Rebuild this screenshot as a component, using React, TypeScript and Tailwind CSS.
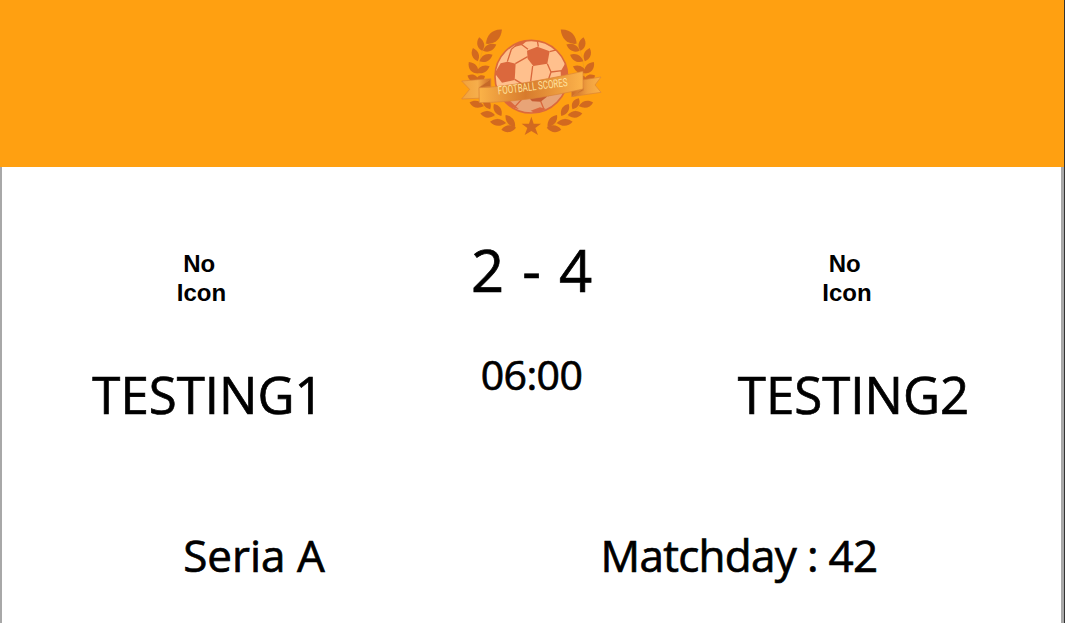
const leaves: [number, number, number, number, number][] = [
  [132, 50, 32, 13, -42],
  [92, 72, 21, 9, -102],
  [119, 83, 22, 9, -25],
  [76, 104, 21, 9, -110],
  [108, 114, 22, 9, -27],
  [70, 143, 22, 10, -128],
  [99, 148, 22, 9, -25],
  [69, 174, 18, 9, 205],
  [91, 176, 16, 8, -30],
  [80, 253, 22, 9, 14],
  [111, 251, 19, 9, 60],
  [113, 283, 22, 9, 6],
  [143, 270, 21, 9, 58],
  [144, 307, 24, 9, 4],
  [181, 303, 23, 9, 52],
  [176, 326, 22, 9, -8],
];

function Leaves() {
  return (
    <g>
      <path d="M108 66 Q88 104 84 170 M88 244 Q118 292 198 324" fill="none" stroke="#e59524" strokeWidth="1.5" />
      {leaves.map(([x, y, rx, ry, angle], i) => (
        <path
          key={i}
          transform={`translate(${x} ${y}) rotate(${angle}) scale(${rx} ${ry * 1.5})`}
          d="M-1 0 C-.5 -.9 .35 -1.1 1 0 C.35 1 -.45 1 -1 0Z"
          fill="#d2691f"
        />
      ))}
    </g>
  );
}

function Logo() {
  return (
    <svg width="165" height="125" viewBox="0 0 495 375" role="img" aria-label="Football Scores">
      <defs>
        <linearGradient id="band">
          <stop offset="0" stopColor="#fbb348" />
          <stop offset=".45" stopColor="#d77b2d" />
          <stop offset="1" stopColor="#fcb34b" />
        </linearGradient>
        <linearGradient id="tail-left">
          <stop offset="0" stopColor="#f2a23c" />
          <stop offset=".55" stopColor="#f6ae4b" />
          <stop offset="1" stopColor="#cc6a27" />
        </linearGradient>
        <linearGradient id="tail-right">
          <stop offset="0" stopColor="#cc6a27" />
          <stop offset=".55" stopColor="#f0a040" />
          <stop offset="1" stopColor="#fbb247" />
        </linearGradient>
        <clipPath id="ball">
          <circle cx="244" cy="170" r="110" />
        </clipPath>
      </defs>
      <Leaves />
      <g transform="translate(488 0) scale(-1 1)">
        <Leaves />
      </g>
      <g clipPath="url(#ball)">
        <circle cx="244" cy="170" r="110" fill="#ffc08d" />
        <path d="M134 220 L360 190 V290 H134Z" fill="#e8a477" />
        <g fill="none" stroke="#d9673c" strokeWidth="4">
          <path d="M196 131 L233 110 M172 125 L184 88 L205 70 L217 75 L234 88 M265 80 L262 62 M299 95 L325 88 M292 131 L303 156 L293 185 M303 156 L336 152 M248 138 L242 184 M194 178 L230 200 M170 236 L216 237 L236 231 M216 237 L193 262 M272 244 L282 268 M293 228 L326 214" />
        </g>
        <g fill="#db683d">
          <path d="M231 92 L262 80 L299 94 L292 131 L250 138 L233 116Z" />
          <path d="M152 130 L172 125 L197 131 L194 180 L156 188 L134 160Z" />
          <path d="M190 82 L210 63 L238 57 L216 75Z" />
          <path d="M298 66 L323 74 L343 105 L325 92Z" />
          <path d="M332 154 L346 130 L358 160 L350 195 L333 180Z" />
          <path d="M236 232 L293 216 L291 230 L272 245 L246 244Z" fill="#c65b32" />
          <path d="M145 210 L174 237 L207 268 L175 258Z" />
          <path d="M242 272 L270 262 L288 267 L260 282Z" />
        </g>
      </g>
      <circle cx="244" cy="170" r="109" fill="none" stroke="#dc693b" strokeWidth="5" />
      <g stroke="#db8436" strokeWidth="2" strokeLinejoin="round">
        <path d="M35 183 L122 176 V233 L35 237 L59 208Z" fill="url(#tail-left)" />
        <path d="M365 185 L453 171 L435 195 L453 217 L365 230Z" fill="url(#tail-right)" />
        <path d="M87 203 L122 177 V199Z M366 230 L400 205 V211Z" fill="#c56929" />
        <path d="M87 203 C160 202 292 178 399 154 V207 C299 231 183 247 88 248Z" fill="url(#band)" />
      </g>
      <text
        x="248"
        y="211"
        transform="rotate(-7 248 200)"
        textAnchor="middle"
        textLength="210"
        lengthAdjust="spacingAndGlyphs"
        fontFamily="Roboto, sans-serif"
        fontSize="34"
        fill="#ffe3a0"
      >
        FOOTBALL SCORES
      </text>
      <path d="M244 290 L251 311 L273 311 L256 324 L264 345 L244 333 L224 345 L232 324 L215 311 L237 311Z" fill="#d2691f" />
    </svg>
  );
}

function Team({ name }: { name: string }) {
  return (
    <div className="flex flex-col items-center">
      <div className="mr-[13px] w-[50px] whitespace-pre text-center font-['Liberation_Sans',sans-serif] text-2xl leading-[29px] font-bold [-webkit-text-stroke:0]">
        <span className="pl-[2px]">{"No "}</span>
        {"\nIcon"}
      </div>
      <h2 className="mt-[52px] text-[51px] leading-[70px] whitespace-nowrap">{name}</h2>
    </div>
  );
}

export default function App() {
  return (
    <div className="h-[623px] w-full overflow-hidden border-r border-[#333333] bg-white font-['Open_Sans',sans-serif] text-black">
      <header className="flex h-[167px] items-start justify-center bg-[#ffa011] pt-5">
        <Logo />
      </header>
      <main className="h-[456px] border-r-[3px] border-l-2 border-[#a8a8a8] [-webkit-text-stroke:0.7px_black]">
        <section className="grid h-[330px] grid-cols-[412px_235px_409px] pt-[82px]">
          <Team name="TESTING1" />
          <div className="flex flex-col items-center pt-[1px]">
            <div className="-mt-5 text-[58px] leading-[80px] [word-spacing:3px] whitespace-nowrap">2 - 4</div>
            <div className="mt-[36px] text-[41px] leading-[56px] tracking-[-0.6px] whitespace-nowrap">06:00</div>
          </div>
          <Team name="TESTING2" />
        </section>
        <section className="grid grid-cols-[504px_466px] pt-[28px] text-[44px] leading-[60px] whitespace-nowrap">
          <p className="text-center">Seria A</p>
          <p className="text-center tracking-[-0.7px]">Matchday : 42</p>
        </section>
      </main>
    </div>
  );
}
